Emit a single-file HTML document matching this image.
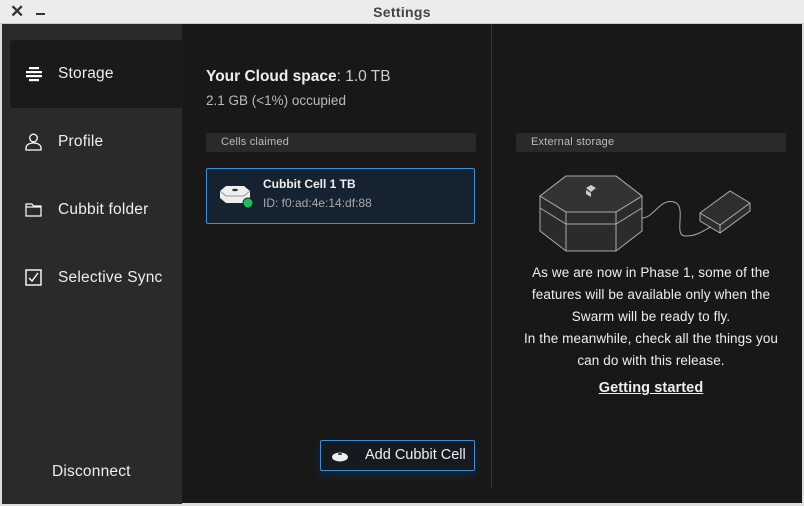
<!DOCTYPE html>
<html><head><style>
*{margin:0;padding:0;box-sizing:border-box}
body{width:804px;height:506px;background:#181818;font-family:"Liberation Sans",sans-serif;position:relative;overflow:hidden;color:#eee}
.tb{position:absolute;left:0;top:0;width:804px;height:24px;background:#ececec;border-bottom:1px solid #ccc}
.tb .t{position:absolute;left:0;right:0;top:4px;text-align:center;font-weight:bold;font-size:14px;color:#444;letter-spacing:.3px}
.side{position:absolute;left:2px;top:24px;width:180px;height:480px;background:#2a2a2a}
.sel{position:absolute;left:10px;top:40px;width:172px;height:68px;background:#1a1a1a;border-radius:4px 0 0 4px}
.it{position:absolute;left:58px;font-size:15.5px;color:#eee;letter-spacing:.2px}
.ic{position:absolute;left:25px}
.ab{position:absolute}
.hdr{position:absolute;height:19px;background:#2a2a2a;border-radius:2px;font-size:11px;color:#bbb;padding:3px 0 0 15px;letter-spacing:.2px}
.p{position:absolute;left:498px;width:306px;text-align:center;font-size:13.5px;color:#eee;line-height:22px;letter-spacing:.1px}
</style></head><body>
<div class="tb"><span style="position:absolute;left:10px;top:2px;font-size:17px;font-weight:bold;color:#333">✕</span><span style="position:absolute;left:36px;top:13px;width:9px;height:2px;background:#333"></span><div class="t">Settings</div></div>
<div style="position:absolute;left:0;top:24px;width:2px;height:482px;background:#ddd"></div>
<div style="position:absolute;left:0;top:503px;width:804px;height:3px;background:#ddd"></div>
<div style="position:absolute;left:802px;top:24px;width:2px;height:482px;background:#ddd"></div>
<div class="side"></div>
<div class="sel"></div>
<svg class="ic" style="top:66px" width="18" height="16"><rect x="4" y="1" width="10" height="2.2" fill="#fff"/><rect x="1" y="5" width="16" height="2.2" fill="#fff"/><rect x="1" y="9" width="16" height="2.2" fill="#fff"/><rect x="4" y="13" width="10" height="2.2" fill="#fff"/></svg>
<div class="it" style="top:65px">Storage</div>
<svg class="ic" style="top:133px" width="18" height="18" fill="none" stroke="#fff" stroke-width="1.3"><circle cx="8.5" cy="5" r="3.8"/><path d="M1 17v-2c0-3 3-5 7.5-5s7.5 2 7.5 5v2z"/></svg>
<div class="it" style="top:133px">Profile</div>
<svg class="ic" style="top:202px" width="18" height="16" fill="none" stroke="#fff" stroke-width="1.2"><path d="M1 2h6l1.5 2H16v10H1z"/><path d="M1 5h15"/></svg>
<div class="it" style="top:201px">Cubbit folder</div>
<svg class="ic" style="top:269px" width="18" height="18" fill="none" stroke="#fff" stroke-width="1.4"><rect x="1" y="1" width="15" height="15"/><path d="M4 9l3 3 6-8"/></svg>
<div class="it" style="top:269px">Selective Sync</div>
<div class="it" style="left:52px;top:463px">Disconnect</div>

<div class="ab" style="left:206px;top:68px;font-size:15.5px"><b>Your Cloud space</b><span style="color:#ccc">: 1.0 TB</span></div>
<div class="ab" style="left:206px;top:93px;font-size:13.5px;color:#bbb">2.1 GB (&lt;1%) occupied</div>
<div class="hdr" style="left:206px;top:133px;width:270px">Cells claimed</div>
<div class="ab" style="left:206px;top:168px;width:269px;height:56px;background:#15222f;border:1px solid #3a8fd8;border-radius:2px"></div>
<svg class="ab" style="left:218px;top:183px" width="40" height="28"><path d="M2 8l6-5h18l6 5v7l-6 5H8l-6-5z" fill="#eee"/><path d="M2 8l6 5h18l6-5" fill="none" stroke="#999"/><ellipse cx="17" cy="7" rx="3" ry="1.2" fill="#333"/><circle cx="30" cy="20" r="5" fill="#1dbf5a" stroke="#15222f" stroke-width="1"/></svg>
<div class="ab" style="left:263px;top:177px;font-size:12px;font-weight:bold">Cubbit Cell 1 TB</div>
<div class="ab" style="left:263px;top:196px;font-size:12px;color:#aaa">ID: f0:ad:4e:14:df:88</div>
<div class="ab" style="left:320px;top:440px;width:155px;height:31px;border:1px solid #3a8fd8;border-radius:2px;background:#151a20;box-shadow:0 4px 10px rgba(20,80,140,.3)"></div>
<svg class="ab" style="left:331px;top:450px" width="18" height="12"><ellipse cx="9" cy="7" rx="8" ry="4.5" fill="#eee"/><ellipse cx="9" cy="4" rx="2" ry="1" fill="#333"/></svg>
<div class="ab" style="left:365px;top:447px;font-size:14.5px">Add Cubbit Cell</div>
<div class="ab" style="left:491px;top:24px;width:1px;height:464px;background:#333"></div>

<div class="hdr" style="left:516px;top:133px;width:270px">External storage</div>
<svg class="ab" style="left:536px;top:166px" width="220" height="90" fill="#2b2b2b" stroke="#aaa" stroke-width="1">
<path d="M4 30l26-20h50l26 20v35l-26 20H30L4 65z"/>
<path d="M4 30l26 16h50l26-16" fill="#222"/>
<path d="M4 30l26-20h50l26 20-26 16H30z" fill="#333"/>
<path d="M4 42l26 16h50l26-16M30 46v39M80 46v39" fill="none"/>
<path d="M50 22l5-3 5 3-5 4zM50 24v4l5 3v-4z" fill="#ccc" stroke="none"/>
<path d="M106 52c12 0 18-20 32-16s-2 35 12 34c12 0 18-6 30-12" fill="none"/>
<path d="M164 47l30-22 20 12v8l-30 22-20-12z" fill="#2e2e2e"/><path d="M164 47l20 12 30-22M184 59v8" fill="none"/>
</svg>
<div class="p" style="top:262px">As we are now in Phase 1, some of the<br>features will be available only when the<br>Swarm will be ready to fly.<br>In the meanwhile, check all the things you<br>can do with this release.</div>
<div class="p" style="top:377px;font-weight:bold;font-size:14.5px;text-decoration:underline">Getting started</div>
</body></html>
